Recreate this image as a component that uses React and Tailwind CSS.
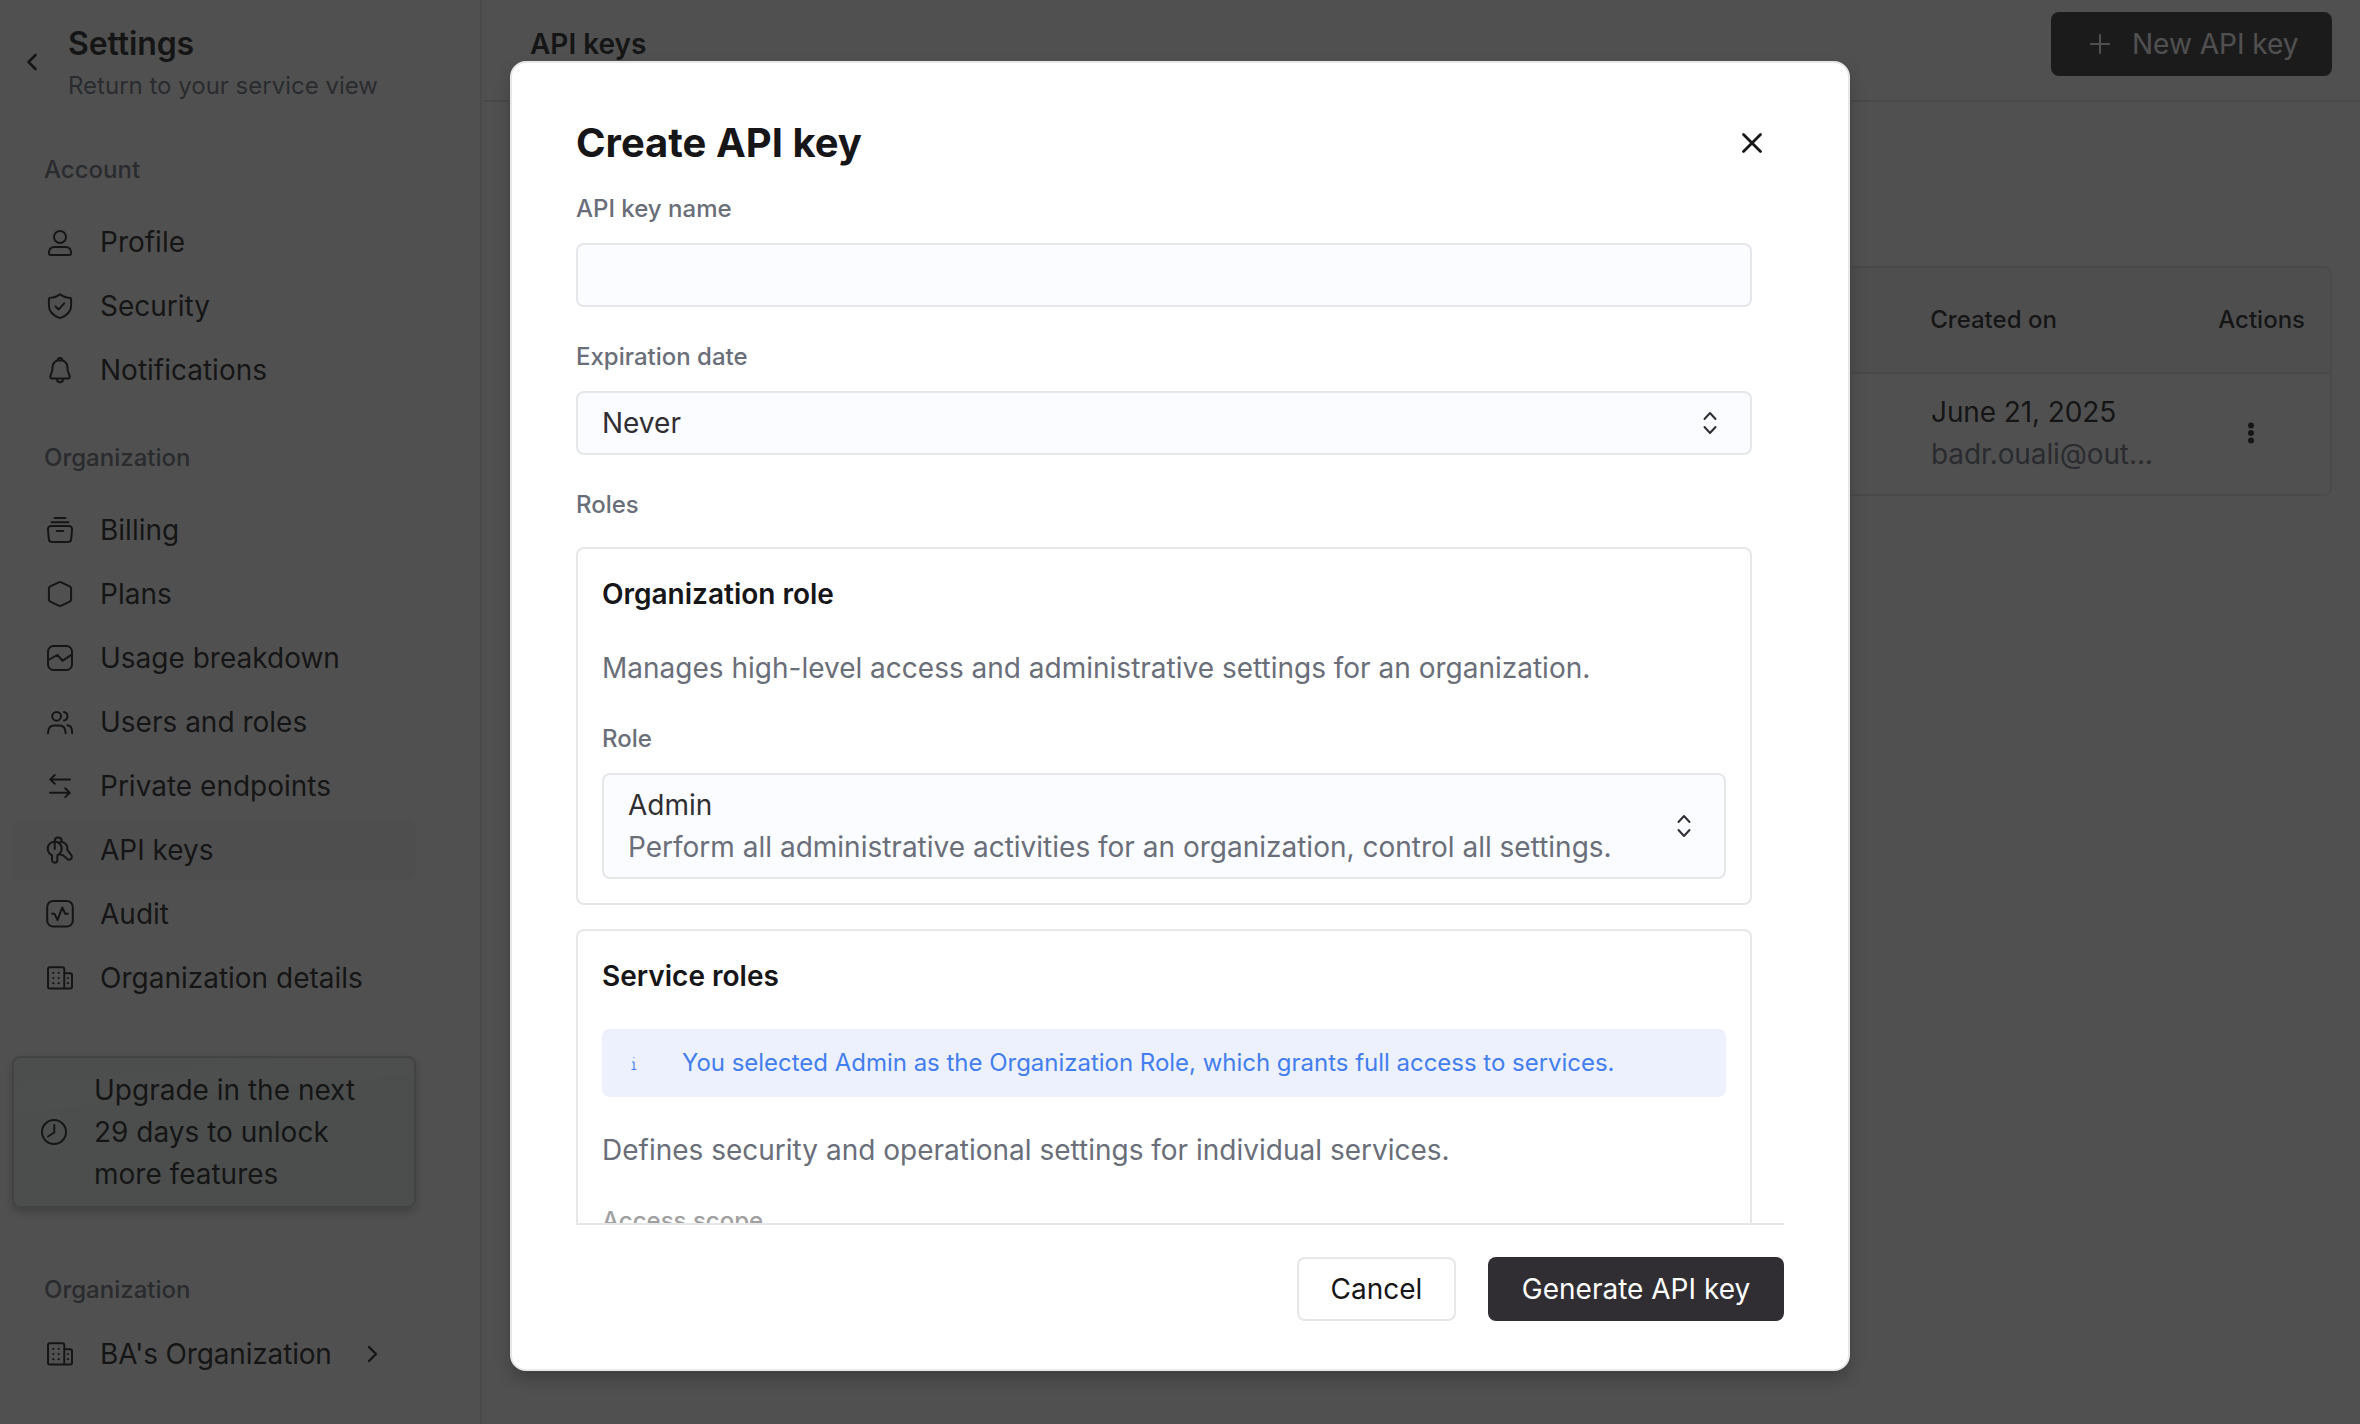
const Icon = ({ children, size = 32, sw = 2 }) => (
  <svg width={size} height={size} viewBox="0 0 32 32" fill="none" stroke="currentColor" strokeWidth={sw} strokeLinecap="round" strokeLinejoin="round" className="shrink-0">
    {children}
  </svg>
);

const Building = () => (
  <Icon>
    <path d="M20.300 26.500H5.700A1.700 1.700 0 0 1 4 24.800V7a1.700 1.700 0 0 1 1.700-1.700h12.900A1.700 1.700 0 0 1 20.300 7v19.500h6a1.700 1.700 0 0 0 1.700-1.700V13a1.700 1.700 0 0 0-1.700-1.700h-6" />
    <path d="M9.300 10.800h.01M14.700 10.800h.01M9.300 16h.01M14.700 16h.01M9.300 21.200h.01M14.700 21.200h.01M24 16h.01M24 21.200h.01" strokeWidth="2.200" />
  </Icon>
);

const icons = {
  profile: (
    <Icon>
      <circle cx="16" cy="11" r="6" />
      <path d="M6.600 29h18.800a1.700 1.700 0 0 0 1.700-1.700c0-3.800-2.300-6.300-6-6.300H10.900c-3.700 0-6 2.500-6 6.300A1.700 1.700 0 0 0 6.600 29Z" />
    </Icon>
  ),
  security: (
    <Icon>
      <path d="M16 4.200c2.800 2.400 6 3.400 9.500 3.500 1 0 1.600.6 1.600 1.600v6.500c0 5.500-3.900 9.800-11.100 12.300C8.800 25.600 4.900 21.300 4.900 15.800V9.300c0-1 .6-1.600 1.600-1.600 3.500-.1 6.700-1.100 9.500-3.500Z" />
      <path d="m11.500 16.400 3.200 3 5.500-6" />
    </Icon>
  ),
  bell: (
    <Icon>
      <path d="M13.500 6.500a2.500 2.500 0 1 1 5 0M13.500 6.500C10 7.500 8.500 10.300 8.500 14c0 5-2.200 6-2.200 8.800 0 1 .8 1.700 1.700 1.700h16c.9 0 1.700-.7 1.700-1.700 0-2.800-2.200-3.800-2.200-8.800 0-3.700-1.500-6.500-5-7.500ZM13 24.700v.6a3 3 0 0 0 6 0v-.6" />
    </Icon>
  ),
  billing: (
    <Icon>
      <path d="M10.500 4h11M7.500 8.200h17M12.800 17h6.500M7 12h18a3 3 0 0 1 3 3.300l-.8 9.800a3 3 0 0 1-3 2.800H7.800a3 3 0 0 1-3-2.800L4 15.300A3 3 0 0 1 7 12Z" />
    </Icon>
  ),
  plans: (
    <Icon>
      <path d="m17.300 4.300 8.400 4a2.300 2.300 0 0 1 1.400 2.200v11a2.300 2.300 0 0 1-1.400 2.200l-8.400 4a2.800 2.800 0 0 1-2.600 0l-8.400-4a2.300 2.300 0 0 1-1.400-2.200v-11a2.300 2.300 0 0 1 1.400-2.200l8.400-4a2.800 2.800 0 0 1 2.600 0Z" />
    </Icon>
  ),
  usage: (
    <Icon>
      <rect x="4" y="4" width="24" height="24" rx="5.500" />
      <path d="m4.300 18 9-5 5.400 5.700 9-6" />
    </Icon>
  ),
  users: (
    <Icon>
      <circle cx="12.600" cy="10.300" r="4.400" />
      <path d="M20 6a4.400 4.400 0 0 1 0 8.600M4 27.300c0-5 2.400-7.700 6.200-7.700h5.200c3.800 0 6.200 2.700 6.200 7.700M23.300 19.300c3.200 0 4.900 3 4.900 8" />
    </Icon>
  ),
  endpoints: (
    <Icon>
      <path d="M26 9.400H6.300M10.800 5 6.200 9.400l4.600 4.300M6 22.700h19.700M21.200 18.300l4.600 4.400-4.600 4.400" />
    </Icon>
  ),
  keys: (
    <Icon>
      <path d="M8 21.200A7 7 0 1 1 13.400 21.200V26a2.700 2.700 0 0 1-5.400 0Z" />
      <path d="M10.700 15V7c0-4.600 7-4.600 7 0M14.500 8.500c5-2 9.700 2 8.800 7.300l4.200 5.500c1.500 2.700-.6 5-3.500 4.300L19 21.300l-4-1.200" />
    </Icon>
  ),
  audit: (
    <Icon>
      <rect x="3.200" y="3" width="25.600" height="25.600" rx="6" />
      <path d="M8 15.800h2.500l3 6.400 4.700-12.700 3 6.300H24" />
    </Icon>
  ),
  building: <Building />,
};

const account = [
  ["profile", "Profile"],
  ["security", "Security"],
  ["bell", "Notifications"],
];
const organization = [
  ["billing", "Billing"],
  ["plans", "Plans"],
  ["usage", "Usage breakdown"],
  ["users", "Users and roles"],
  ["endpoints", "Private endpoints"],
  ["keys", "API keys"],
  ["audit", "Audit"],
  ["building", "Organization details"],
];

const NavItem = ({ icon, label, active }) => (
  <a className={`flex h-[60px] items-center gap-6 rounded-lg px-8 ${active ? "bg-[#f6f7fa]" : ""}`}>
    {icons[icon]}
    <span>{label}</span>
  </a>
);

const SectionLabel = ({ children }) => (
  <div className="h-9 px-8 text-[24px] leading-9 font-medium text-[#696e79]">{children}</div>
);

const Sidebar = () => (
  <aside className="flex w-[482px] shrink-0 flex-col border-r-2 border-[#e6e7e9] px-3 pt-5">
    <div className="flex items-center gap-5 pl-1">
      <Icon sw={2.6}>
        <path d="m19.500 9-7 7 7 7" />
      </Icon>
      <div>
        <div className="text-[32px] leading-[48px] font-semibold tracking-[-0.1px]">Settings</div>
        <div className="text-[24px] leading-9 text-[#696e79]">Return to your service view</div>
      </div>
    </div>
    <div className="mt-12">
      <SectionLabel>Account</SectionLabel>
    </div>
    <nav className="mt-6 flex flex-col gap-1">
      {account.map(([icon, label]) => (
        <NavItem key={label} icon={icon} label={label} />
      ))}
    </nav>
    <div className="mt-10">
      <SectionLabel>Organization</SectionLabel>
    </div>
    <nav className="mt-6 flex w-[404px] flex-col gap-1">
      {organization.map(([icon, label]) => (
        <NavItem key={label} icon={icon} label={label} active={label === "API keys"} />
      ))}
    </nav>
    <div className="mt-12 flex h-[152px] w-[404px] items-center gap-6 rounded-lg border-2 border-[#c5c9c8] bg-[linear-gradient(174.4deg,#ecf8f4_0%,#f5f5f5_29%,#ecf8f4_29.5%,#ecf8f4_100%)] px-6 shadow-[0_4px_8px_rgba(0,0,0,0.25)]">
      <Icon>
        <circle cx="16" cy="16" r="12" />
        <path d="M16.300 9v7.500L10 20.500" />
      </Icon>
      <p className="w-[280px]">Upgrade in the next 29 days to unlock more features</p>
    </div>
    <div className="mt-16">
      <SectionLabel>Organization</SectionLabel>
    </div>
    <div className="mt-4 flex h-[60px] items-center px-8">
      <Building />
      <span className="ml-6 tracking-[-0.17px]">BA's Organization</span>
      <span className="ml-6">
        <Icon sw={2.4}>
          <path d="m13 9 7 7-7 7" />
        </Icon>
      </span>
    </div>
  </aside>
);

const Main = () => (
  <main className="flex grow flex-col">
    <header className="flex h-[102px] items-start justify-between border-b-2 border-[#e6e7e9] pt-3 pr-7 pl-12">
      <h1 className="mt-[11px] font-semibold">API keys</h1>
      <button className="flex h-16 w-[281px] items-center gap-4 rounded-lg bg-[#302e32] pl-[33px] text-white">
        <Icon>
          <path d="M16 7v18M7 16h18" />
        </Icon>
        New API key
      </button>
    </header>
    <div className="mt-[164px] mr-7 ml-12 overflow-hidden rounded-lg border-2 border-[#e6e7e9]">
      <div className="flex h-[106px] items-center justify-end border-b-2 border-[#e6e7e9] bg-[#f6f7fa] pr-[25px] text-[24px] font-medium">
        <span className="w-[288px]">Created on</span>
        <span>Actions</span>
      </div>
      <div className="flex h-[120px] items-center justify-end bg-white pb-[3px]">
        <div className="w-[287px] tracking-[-0.1px]">
          <div>June 21, 2025</div>
          <div className="text-[#696e79]">badr.ouali@out...</div>
        </div>
        <svg width="32" height="32" viewBox="0 0 32 32" fill="currentColor" className="mr-[63px] ml-[17px]">
          <circle cx="16" cy="8.500" r="3" />
          <circle cx="16" cy="16" r="3" />
          <circle cx="16" cy="23.500" r="3" />
        </svg>
      </div>
    </div>
  </main>
);

const UpDown = () => (
  <Icon>
    <path d="m10.500 12 5.500-6 5.500 6M10.500 20l5.500 6 5.500-6" />
  </Icon>
);

const Label = ({ children }) => (
  <div className="text-[24px] leading-9 font-medium text-[#696e79]">{children}</div>
);

const Modal = () => (
  <div className="absolute top-[60.5px] left-[510px] flex h-[1310px] w-[1340px] flex-col rounded-2xl border-2 border-[#e6e7e9] bg-white px-16 shadow-[0_8px_16px_rgba(0,0,0,0.22)]">
    <div className="flex shrink-0 items-center justify-between pt-[50px] pr-4">
      <h2 className="text-[40px] leading-[60px] font-bold">Create API key</h2>
      <Icon sw={2.8}>
        <path d="m7.500 7.500 17 17M24.500 7.500l-17 17" />
      </Icon>
    </div>
    <div className="flex h-[1050px] shrink-0 flex-col overflow-hidden pt-[18px] pr-8">
      <Label>API key name</Label>
      <div className="mt-4 h-16 shrink-0 rounded-lg border-2 border-[#e6e7e9] bg-[#fbfcff]" />
      <div className="mt-8">
        <Label>Expiration date</Label>
      </div>
      <div className="mt-4 flex h-16 shrink-0 items-center justify-between rounded-lg border-2 border-[#e6e7e9] bg-[#fbfcff] px-6 text-[#302e32]">
        Never
        <UpDown />
      </div>
      <div className="mt-8">
        <Label>Roles</Label>
      </div>
      <section className="mt-6 h-[358px] shrink-0 rounded-lg border-2 border-[#e6e7e9] px-6 pt-6">
        <h3 className="font-semibold">Organization role</h3>
        <p className="mt-8 text-[#696e79]">Manages high-level access and administrative settings for an organization.</p>
        <div className="mt-8">
          <Label>Role</Label>
        </div>
        <div className="mt-4 flex h-[106px] items-center justify-between rounded-lg border-2 border-[#e6e7e9] bg-[#fbfcff] px-6 text-[#302e32]">
          <div>
            <div>Admin</div>
            <div className="text-[#696e79]">Perform all administrative activities for an organization, control all settings.</div>
          </div>
          <UpDown />
        </div>
      </section>
      <section className="mt-6 h-[500px] shrink-0 rounded-lg border-2 border-[#e6e7e9] px-6 pt-6">
        <h3 className="font-semibold">Service roles</h3>
        <div className="mt-8 flex h-[68px] items-center rounded-lg bg-[#edf1fd] pl-4 text-[24px] text-[#437eef]">
          <Icon sw={1.2}>
            <path d="M14.500 15h1.500v7.500M14 22.500h4M15.900 10.500h.1" />
          </Icon>
          <span className="ml-8 tracking-[-0.02px]">You selected Admin as the Organization Role, which grants full access to services.</span>
        </div>
        <p className="mt-8 text-[#696e79]">Defines security and operational settings for individual services.</p>
        <div className="mt-8 text-[24px] leading-9 font-medium text-[#a0a0a0]">Access scope</div>
      </section>
    </div>
    <footer className="flex shrink-0 justify-end gap-8 border-t-2 border-[#e6e7e9] pt-8">
      <button className="h-16 w-[159px] rounded-lg border-2 border-[#e6e7e9]">Cancel</button>
      <button className="h-16 w-[296px] rounded-lg bg-[#302e32] text-white">Generate API key</button>
    </footer>
  </div>
);

export default function App() {
  return (
    <div className="relative flex h-[1424px] w-[2360px] overflow-hidden bg-white font-['Inter',sans-serif] text-[28px] leading-[42px] text-[#161517]">
      <Sidebar />
      <Main />
      <div className="absolute inset-0 bg-[#151515]/75" />
      <Modal />
    </div>
  );
}
